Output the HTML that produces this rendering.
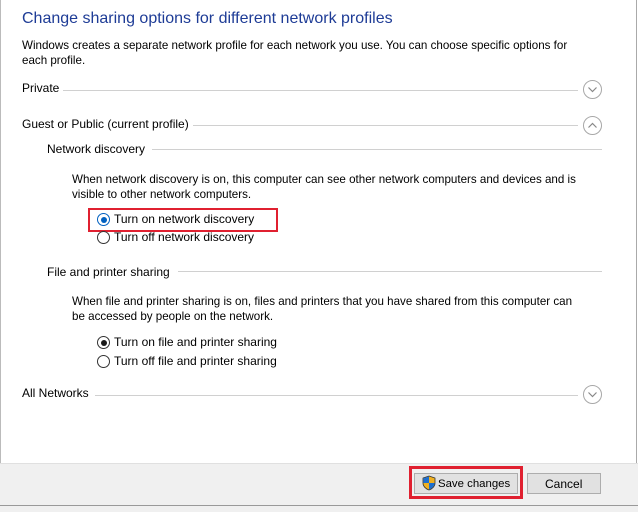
<!DOCTYPE html>
<html><head><style>
body{margin:0;width:638px;height:511px;background:#fff;font-family:"Liberation Sans",sans-serif;font-size:12px;color:#000;position:relative;overflow:hidden}
.a{position:absolute;white-space:nowrap}
.line{position:absolute;height:1px;background:#d0d0d0}
.circ{position:absolute;width:17px;height:17px;border:1px solid #a8a8a8;border-radius:50%}
.circ svg{position:absolute;left:3px;top:4px}
.rad{position:absolute;width:11px;height:11px;border:1px solid #333;border-radius:50%;background:#fff}
.rad.on::after{content:"";position:absolute;left:2.5px;top:2.5px;width:6px;height:6px;border-radius:50%;background:#1a1a1a}
.rad.blue{border-color:#0060c0}
.rad.blue::after{background:#0060c0}
</style></head><body>
<div style="position:absolute;left:0;top:0;width:1px;height:511px;background:#bbb"></div>
<div style="position:absolute;right:1px;top:0;width:1px;height:463px;background:#aaa"></div>
<div class="a" style="left:22px;top:10px;font-size:16px;color:#1e3c96">Change sharing options for different network profiles</div>
<div class="a" style="left:22px;top:38px;line-height:15px;font-size:11.6px">Windows creates a separate network profile for each network you use. You can choose specific options for<br>each profile.</div>
<div class="a" style="left:22px;top:81px">Private</div><div class="line" style="left:63px;width:515px;top:90px"></div>
<div class="circ" style="left:583px;top:80px"><svg width="11" height="9"><path d="M1.5 2.5L5.5 6.5L9.5 2.5" stroke="#888" fill="none" stroke-width="1.2"/></svg></div>
<div class="a" style="left:22px;top:117px">Guest or Public (current profile)</div><div class="line" style="left:193px;width:385px;top:125px"></div>
<div class="circ" style="left:583px;top:116px"><svg width="11" height="9"><path d="M1.5 6.5L5.5 2.5L9.5 6.5" stroke="#888" fill="none" stroke-width="1.2"/></svg></div>
<div class="a" style="left:47px;top:142px">Network discovery</div><div class="line" style="left:152px;width:450px;top:149px"></div>
<div class="a" style="left:72px;top:172px;line-height:15px;font-size:11.6px">When network discovery is on, this computer can see other network computers and devices and is<br>visible to other network computers.</div>
<div style="position:absolute;left:88px;top:208px;width:186px;height:20px;border:2px solid #e02030"></div>
<div class="rad on blue" style="left:97px;top:213px"></div><div class="a" style="left:114px;top:212px">Turn on network discovery</div>
<div class="rad" style="left:97px;top:231px"></div><div class="a" style="left:114px;top:230px">Turn off network discovery</div>
<div class="a" style="left:47px;top:265px">File and printer sharing</div><div class="line" style="left:178px;width:424px;top:271px"></div>
<div class="a" style="left:72px;top:294px;line-height:15px;font-size:11.6px">When file and printer sharing is on, files and printers that you have shared from this computer can<br>be accessed by people on the network.</div>
<div class="rad on" style="left:97px;top:336px"></div><div class="a" style="left:114px;top:335px">Turn on file and printer sharing</div>
<div class="rad" style="left:97px;top:355px"></div><div class="a" style="left:114px;top:354px">Turn off file and printer sharing</div>
<div class="a" style="left:22px;top:386px">All Networks</div><div class="line" style="left:95px;width:483px;top:395px"></div>
<div class="circ" style="left:583px;top:385px"><svg width="11" height="9"><path d="M1.5 2.5L5.5 6.5L9.5 2.5" stroke="#888" fill="none" stroke-width="1.2"/></svg></div>
<div style="position:absolute;left:0;top:463px;width:638px;height:48px;background:#f0f0f0;border-top:1px solid #e0e0e0"></div>
<div style="position:absolute;left:0;top:505px;width:638px;height:1px;background:#999"></div>
<div style="position:absolute;left:409px;top:466px;width:114px;height:33px;border:3px solid #e02030;box-sizing:border-box"></div>
<div style="position:absolute;left:414px;top:473px;width:104px;height:21px;background:#e1e1e1;border:1px solid #adadad;box-sizing:border-box"></div>
<svg style="position:absolute;left:422px;top:475px" width="14" height="16" viewBox="0 0 14 16"><path d="M7 1L13 3V8C13 11.5 10 14 7 15C4 14 1 11.5 1 8V3Z" fill="#f0b020" stroke="#333" stroke-width=".8"/><path d="M7 1.5V8H1.3V3.2ZM7 8H12.7C12.6 11 10 13.6 7 14.5Z" fill="#1e6fd0"/></svg>
<div class="a" style="left:438px;top:478px;font-size:11.4px">Save changes</div>
<div style="position:absolute;left:527px;top:473px;width:74px;height:21px;background:#e1e1e1;border:1px solid #adadad;box-sizing:border-box"></div>
<div class="a" style="left:545px;top:477px">Cancel</div>
</body></html>
